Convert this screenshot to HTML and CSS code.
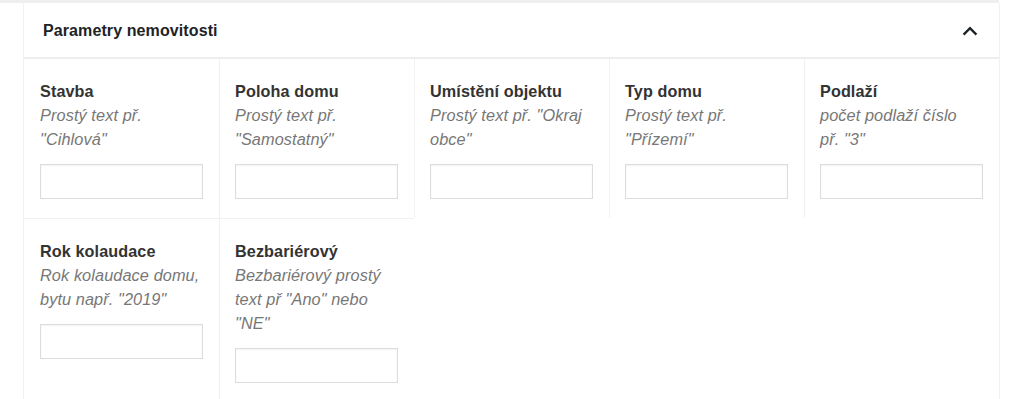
FILE: index.html
```html
<!DOCTYPE html>
<html lang="cs">
<head>
<meta charset="utf-8">
<title>Parametry nemovitosti</title>
<link rel="stylesheet" href="styles.css">
</head>
<body>
<div class="top-strip"></div>
<div class="postbox">
  <div class="postbox-header">
    <h2 class="postbox-title">Parametry nemovitosti</h2>
    <button class="toggle" aria-label="Sbalit">
      <svg width="16" height="10" viewBox="0 0 16 10"><polyline points="1.6,8.6 8,2.2 14.4,8.6" fill="none" stroke="#1d2327" stroke-width="2.4" stroke-linecap="butt" stroke-linejoin="miter"/></svg>
    </button>
  </div>
  <div class="fields">
    <div class="field">
      <label class="label">Stavba</label>
      <p class="description">Prostý text př. "Cihlová"</p>
      <input class="text-input" type="text">
    </div>
    <div class="field">
      <label class="label">Poloha domu</label>
      <p class="description">Prostý text př. "Samostatný"</p>
      <input class="text-input" type="text">
    </div>
    <div class="field">
      <label class="label">Umístění objektu</label>
      <p class="description">Prostý text př. "Okraj obce"</p>
      <input class="text-input" type="text">
    </div>
    <div class="field">
      <label class="label">Typ domu</label>
      <p class="description">Prostý text př. "Přízemí"</p>
      <input class="text-input" type="text">
    </div>
    <div class="field">
      <label class="label">Podlaží</label>
      <p class="description">počet podlaží číslo<br>př. "3"</p>
      <input class="text-input" type="text">
    </div>
    <div class="field field-row2">
      <label class="label">Rok kolaudace</label>
      <p class="description">Rok kolaudace domu, bytu např. "2019"</p>
      <input class="text-input" type="text">
    </div>
    <div class="field field-row2">
      <label class="label">Bezbariérový</label>
      <p class="description">Bezbariérový prostý text př "Ano" nebo "NE"</p>
      <input class="text-input" type="text">
    </div>
  </div>
</div>
</body>
</html>
```
FILE: styles.css
```css
* { box-sizing: border-box; }
html, body { margin: 0; padding: 0; background: #ffffff; }
body {
  font-family: "Liberation Sans", Arial, sans-serif;
  color: #333333;
  overflow: hidden;
}
.top-strip {
  width: 999px;
  height: 3px;
  background: #efefef;
}
.postbox {
  margin-left: 23px;
  width: 977px;
  border-right: 1px solid #f1f1f1;
}
.postbox-header {
  height: 56px;
  display: flex;
  align-items: center;
  justify-content: space-between;
  padding: 1px 21px 0 19px;
  border-left: 1px solid #f1f1f1;
  border-bottom: 2px solid #eeeeee;
}
.postbox-title {
  margin: 0;
  font-size: 16px;
  font-weight: 700;
  color: #1d2327;
  letter-spacing: 0.1px;
}
.toggle {
  border: 0;
  background: none;
  padding: 0;
  display: flex;
  width: 16px;
  height: 10px;
}
.fields {
  display: grid;
  grid-template-columns: repeat(5, 195px);
  width: 976px;
  border-left: 1px solid #f1f1f1;
}
.field {
  padding: 21px 16px 19px 15px;
  border-left: 1px solid #f1f1f1;
  display: flex;
  flex-direction: column;
  align-items: stretch;
}
.field:first-child,
.field:nth-child(6) {
  border-left: 0;
  padding-left: 16px;
}
.field-row2 {
  border-top: 1px solid #f1f1f1;
}
.label {
  display: block;
  font-size: 16.2px;
  line-height: 23px;
  font-weight: 700;
  color: #333333;
  letter-spacing: 0.1px;
}
.description {
  margin: 0;
  font-size: 16.3px;
  line-height: 24px;
  font-style: italic;
  color: #777777;
  letter-spacing: 0.1px;
}
.text-input {
  margin-top: 13px;
  width: 100%;
  height: 35px;
  border: 1px solid #dcdcdc;
  border-radius: 0;
  background: #ffffff;
  box-shadow: inset 0 1px 2px rgba(0, 0, 0, 0.05);
  padding: 0 8px;
  font: inherit;
}
```
